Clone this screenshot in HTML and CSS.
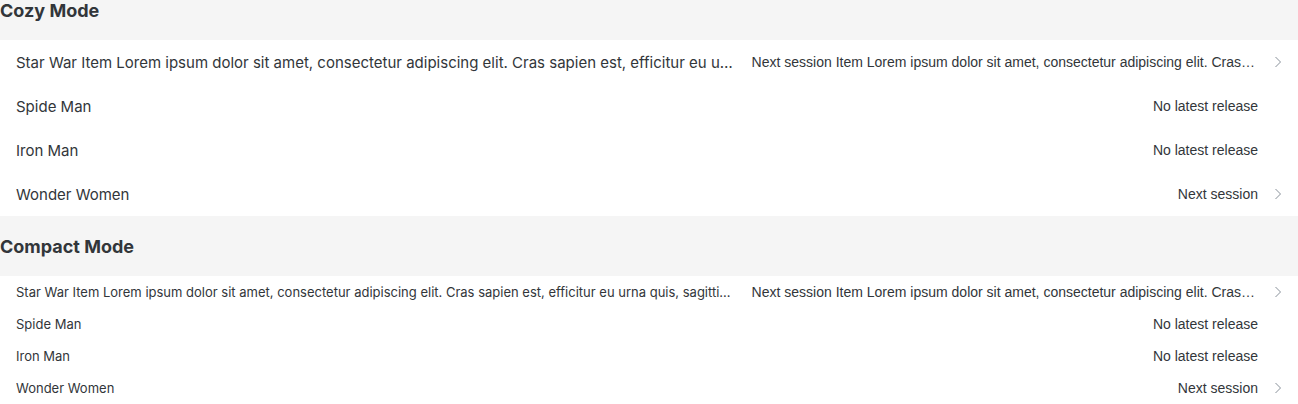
FILE: index.html
```html
<!DOCTYPE html>
<html lang="en">
<head>
<meta charset="utf-8">
<title>List modes</title>
<link rel="stylesheet" href="styles.css">
</head>
<body>
<div class="page">
  <section class="group">
    <h2 class="group-title">Cozy Mode</h2>
    <ul class="list list--cozy">
      <li class="item">
        <span class="item-title">Star War Item Lorem ipsum dolor sit amet, consectetur adipiscing elit. Cras sapien est, efficitur eu urna quis, sagittis dapibus nisi. Donec in mattis lectus.</span>
        <span class="item-info">Next session Item Lorem ipsum dolor sit amet, consectetur adipiscing elit. Cras sapien est, efficitur eu urna quis.</span>
        <span class="item-nav"><svg class="chev" viewBox="0 0 8 12" width="8" height="12"><path d="M1.5 1 L6.5 6 L1.5 11" fill="none" stroke="currentColor" stroke-width="1"/></svg></span>
      </li>
      <li class="item">
        <span class="item-title">Spide Man</span>
        <span class="item-info">No latest release</span>
        <span class="item-nav"></span>
      </li>
      <li class="item">
        <span class="item-title">Iron Man</span>
        <span class="item-info">No latest release</span>
        <span class="item-nav"></span>
      </li>
      <li class="item">
        <span class="item-title">Wonder Women</span>
        <span class="item-info">Next session</span>
        <span class="item-nav"><svg class="chev" viewBox="0 0 8 12" width="8" height="12"><path d="M1.5 1 L6.5 6 L1.5 11" fill="none" stroke="currentColor" stroke-width="1"/></svg></span>
      </li>
    </ul>
  </section>
  <section class="group">
    <h2 class="group-title">Compact Mode</h2>
    <ul class="list list--compact">
      <li class="item">
        <span class="item-title">Star War Item Lorem ipsum dolor sit amet, consectetur adipiscing elit. Cras sapien est, efficitur eu urna quis, sagittis dapibus nisi. Donec in mattis lectus.</span>
        <span class="item-info">Next session Item Lorem ipsum dolor sit amet, consectetur adipiscing elit. Cras sapien est, efficitur eu urna quis.</span>
        <span class="item-nav"><svg class="chev" viewBox="0 0 8 12" width="8" height="12"><path d="M1.5 1 L6.5 6 L1.5 11" fill="none" stroke="currentColor" stroke-width="1"/></svg></span>
      </li>
      <li class="item">
        <span class="item-title">Spide Man</span>
        <span class="item-info">No latest release</span>
        <span class="item-nav"></span>
      </li>
      <li class="item">
        <span class="item-title">Iron Man</span>
        <span class="item-info">No latest release</span>
        <span class="item-nav"></span>
      </li>
      <li class="item">
        <span class="item-title">Wonder Women</span>
        <span class="item-info">Next session</span>
        <span class="item-nav"><svg class="chev" viewBox="0 0 8 12" width="8" height="12"><path d="M1.5 1 L6.5 6 L1.5 11" fill="none" stroke="currentColor" stroke-width="1"/></svg></span>
      </li>
    </ul>
  </section>
</div>
</body>
</html>
```

FILE: styles.css
```css
html, body {
  margin: 0;
  padding: 0;
  background: #ffffff;
}
body {
  font-family: Inter, "Liberation Sans", sans-serif;
  color: #32363a;
  overflow: hidden;
}
.page {
  margin-top: -20px;
}
.group-title {
  margin: 0;
  height: 60px;
  display: flex;
  align-items: center;
  background: #f5f5f5;
  font-family: Inter, "Liberation Sans", sans-serif;
  font-weight: 700;
  font-size: 18px;
  color: #32363a;
}
.list {
  list-style: none;
  margin: 0;
  padding: 0;
}
.item {
  display: flex;
  align-items: center;
  padding: 0 16px;
  background: #ffffff;
}
.list--cozy .item {
  height: 44px;
}
.list--compact .item {
  height: 32px;
}
.item-title {
  flex: 1 1 auto;
  min-width: 0;
  white-space: nowrap;
  overflow: hidden;
  text-overflow: ellipsis;
  margin-right: 16px;
}
.list--cozy .item-title {
  font-size: 15px;
}
.list--compact .item-title {
  font-size: 13px;
}
.item-info {
  flex: 0 0 auto;
  max-width: 40%;
  white-space: nowrap;
  overflow: hidden;
  text-overflow: ellipsis;
  font-family: "Liberation Sans", Arial, sans-serif;
  font-size: 14px;
  color: #32363a;
}
.item-nav {
  flex: 0 0 24px;
  display: flex;
  justify-content: flex-end;
  align-items: center;
  color: #89919a;
}
.chev {
  display: block;
}
```
